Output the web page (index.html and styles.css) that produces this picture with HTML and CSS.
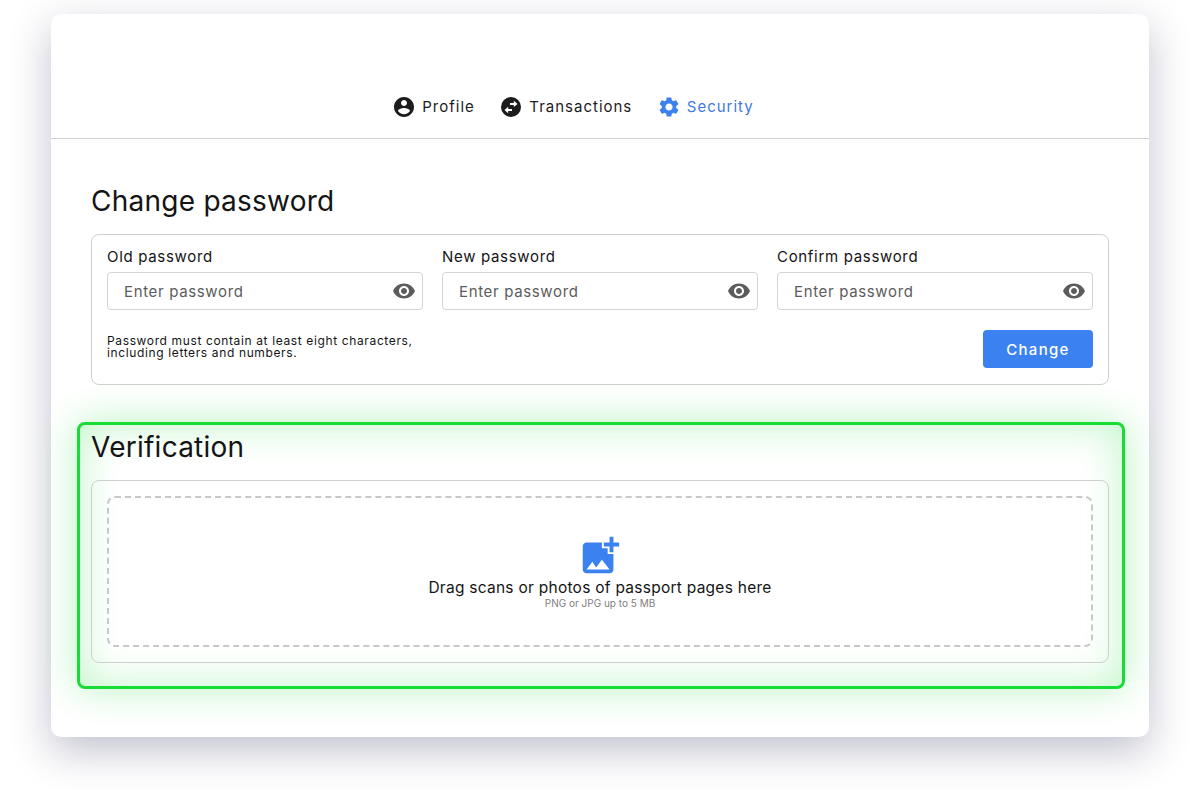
FILE: index.html
```html
<!DOCTYPE html>
<html lang="en">
<head>
<meta charset="utf-8">
<title>Security</title>
<link rel="stylesheet" href="styles.css">
</head>
<body>
<main class="card">
  <nav class="tabs">
    <a class="tab">
      <svg class="tab-icon" viewBox="0 0 24 24"><path fill="#1c1c1c" d="M12 2C6.48 2 2 6.48 2 12s4.48 10 10 10 10-4.48 10-10S17.52 2 12 2zm0 3c1.66 0 3 1.34 3 3s-1.34 3-3 3-3-1.34-3-3 1.34-3 3-3zm0 14.2c-2.5 0-4.71-1.28-6-3.22.03-1.99 4-3.08 6-3.08 1.99 0 5.97 1.09 6 3.08-1.29 1.94-3.5 3.22-6 3.22z"/></svg>
      Profile
    </a>
    <a class="tab">
      <svg class="tab-icon" viewBox="0 0 24 24"><circle cx="12" cy="12" r="10" fill="#1c1c1c"/><path fill="#fff" d="M11 8h3.800V5.700l3.700 3.200-3.700 3.200V9.900H11zM13 15.900H9.200v2.300l-3.700-3.200 3.700-3.200v2.200H13z"/></svg>
      Transactions
    </a>
    <a class="tab tab-active">
      <svg class="tab-icon" viewBox="0 0 24 24"><path fill="#3b82f0" d="M19.14 12.94c.04-.3.06-.61.06-.94 0-.32-.02-.64-.07-.94l2.03-1.58c.18-.14.23-.41.12-.61l-1.92-3.32c-.12-.22-.37-.29-.59-.22l-2.39.96c-.5-.38-1.03-.7-1.62-.94l-.36-2.54c-.04-.24-.24-.41-.48-.41h-3.84c-.24 0-.43.17-.47.41l-.36 2.54c-.59.24-1.13.57-1.62.94l-2.39-.96c-.22-.08-.47 0-.59.22L2.74 8.87c-.12.21-.08.47.12.61l2.03 1.58c-.05.3-.09.63-.09.94s.02.64.07.94l-2.03 1.58c-.18.14-.23.41-.12.61l1.92 3.32c.12.22.37.29.59.22l2.39-.96c.5.38 1.03.7 1.62.94l.36 2.54c.05.24.24.41.48.41h3.84c.24 0 .44-.17.47-.41l.36-2.54c.59-.24 1.13-.56 1.62-.94l2.39.96c.22.08.47 0 .59-.22l1.92-3.32c.12-.22.07-.47-.12-.61l-2.01-1.58zM12 15.6c-1.98 0-3.6-1.62-3.6-3.6s1.62-3.6 3.6-3.6 3.6 1.62 3.6 3.6-1.62 3.6-3.6 3.6z"/></svg>
      Security
    </a>
  </nav>

  <section class="password">
    <h2 class="title">Change password</h2>
    <div class="box">
      <div class="fields">
        <label class="field">
          <span class="field-label">Old password</span>
          <span class="input"><span class="placeholder">Enter password</span>
            <svg class="eye" viewBox="0 0 24 24"><path fill="#5c5c5c" d="M12 4.5C7 4.5 2.73 7.61 1 12c1.73 4.39 6 7.5 11 7.5s9.27-3.11 11-7.5c-1.73-4.39-6-7.5-11-7.5zM12 17c-2.76 0-5-2.24-5-5s2.24-5 5-5 5 2.24 5 5-2.24 5-5 5zm0-8c-1.66 0-3 1.34-3 3s1.34 3 3 3 3-1.34 3-3-1.34-3-3-3z"/></svg>
          </span>
        </label>
        <label class="field">
          <span class="field-label">New password</span>
          <span class="input"><span class="placeholder">Enter password</span>
            <svg class="eye" viewBox="0 0 24 24"><path fill="#5c5c5c" d="M12 4.5C7 4.5 2.73 7.61 1 12c1.73 4.39 6 7.5 11 7.5s9.27-3.11 11-7.5c-1.73-4.39-6-7.5-11-7.5zM12 17c-2.76 0-5-2.24-5-5s2.24-5 5-5 5 2.24 5 5-2.24 5-5 5zm0-8c-1.66 0-3 1.34-3 3s1.34 3 3 3 3-1.34 3-3-1.34-3-3-3z"/></svg>
          </span>
        </label>
        <label class="field">
          <span class="field-label">Confirm password</span>
          <span class="input"><span class="placeholder">Enter password</span>
            <svg class="eye" viewBox="0 0 24 24"><path fill="#5c5c5c" d="M12 4.5C7 4.5 2.73 7.61 1 12c1.73 4.39 6 7.5 11 7.5s9.27-3.11 11-7.5c-1.73-4.39-6-7.5-11-7.5zM12 17c-2.76 0-5-2.24-5-5s2.24-5 5-5 5 2.24 5 5-2.24 5-5 5zm0-8c-1.66 0-3 1.34-3 3s1.34 3 3 3 3-1.34 3-3-1.34-3-3-3z"/></svg>
          </span>
        </label>
      </div>
      <div class="actions">
        <p class="hint">Password must contain at least eight characters,<br>including letters and numbers.</p>
        <button class="button" type="button">Change</button>
      </div>
    </div>
  </section>

  <section class="verification">
    <h2 class="title">Verification</h2>
    <div class="box">
      <div class="drop">
        <svg class="drop-icon" viewBox="0 0 24 24"><path fill="#3b82f0" d="M19 7v2.99s-1.99.01-2 0V7h-3s.01-1.99 0-2h3V2h2v3h3v2h-3zm-3 4V8h-3V5H5c-1.1 0-2 .9-2 2v12c0 1.1.9 2 2 2h12c1.1 0 2-.9 2-2v-8h-3zM5 19l3-4 2 3 3-4 4 5H5z"/></svg>
        <p class="drop-text">Drag scans or photos of passport pages here</p>
        <p class="drop-sub">PNG or JPG up to 5 MB</p>
      </div>
    </div>
  </section>
</main>
</body>
</html>
```
FILE: styles.css
```css
* { box-sizing: border-box; }
html, body { height: 100%; }
body {
  margin: 0;
  padding: 14px 51px 0;
  background: #fff;
  overflow: hidden;
  font-family: "Inter", "Open Sans", sans-serif;
  color: #141414;
}
.card {
  height: 723px;
  background: #fff;
  border-radius: 10px;
  box-shadow: 0 14px 40px rgba(50, 50, 95, 0.3);
}
.tabs {
  height: 125px;
  padding: 0 54px 19px 0;
  display: flex;
  justify-content: center;
  align-items: flex-end;
  gap: 24.500px;
  border-bottom: 1px solid #d0d0d0;
}
.tab {
  display: flex;
  align-items: center;
  gap: 6px;
  font-size: 15px;
  line-height: 24px;
  letter-spacing: 1px;
  color: #1c1c1c;
}
.tab-active { color: #3f78e0; }
.tab-icon { width: 24px; height: 24px; }
.password { padding: 44px 40px 0; }
.title {
  margin: 0 0 15px;
  font-size: 28px;
  line-height: 36px;
  letter-spacing: 0.25px;
  font-weight: 400;
  color: #141414;
}
.box {
  border: 1px solid #cfcfcf;
  border-radius: 8px;
  padding: 14px 15px 15px;
}
.password .box { height: 151px; }
.fields {
  display: grid;
  grid-template-columns: repeat(3, 1fr);
  gap: 19px;
}
.field { display: block; }
.field-label {
  display: block;
  font-size: 15px;
  line-height: 16px;
  letter-spacing: 0.68px;
  margin-bottom: 7px;
}
.input {
  height: 38px;
  padding: 0 6px 0 16px;
  border: 1px solid #d4d4d4;
  border-radius: 4px;
  display: flex;
  align-items: center;
  justify-content: space-between;
}
.placeholder { font-size: 15px; letter-spacing: 0.65px; color: #5c5c5c; }
.eye { width: 24px; height: 24px; }
.actions {
  margin-top: 20px;
  display: flex;
  justify-content: space-between;
  align-items: center;
}
.hint {
  margin: 0 0 5px;
  font-size: 12px;
  line-height: 12px;
  letter-spacing: 0.63px;
}
.button {
  width: 110px;
  height: 38px;
  border: 0;
  border-radius: 4px;
  background: #3b82f0;
  color: #fff;
  font: 500 15px "Inter", sans-serif;
  letter-spacing: 1.3px;
}
.verification {
  margin: 37px 24px 0 26px;
  height: 267px;
  padding: 4px 13px 0 11px;
  border: 3px solid #18dc36;
  border-radius: 8px;
  box-shadow: 0 0 38px rgba(24, 220, 54, 0.3), inset 0 0 40px rgba(24, 220, 54, 0.28);
}
.verification .box { height: 183px; padding-top: 15px; }
.drop {
  height: 151px;
  border: 2px dashed #c8c8c8;
  border-radius: 8px;
  display: flex;
  flex-direction: column;
  align-items: center;
  padding-top: 35px;
}
.drop-icon { width: 46px; height: 46px; flex: none; }
.drop-text { margin: 0; font-size: 15.500px; line-height: 18px; letter-spacing: 0.26px; }
.drop-sub { margin: 0; font-size: 10px; line-height: 13px; color: #808080; }
```
